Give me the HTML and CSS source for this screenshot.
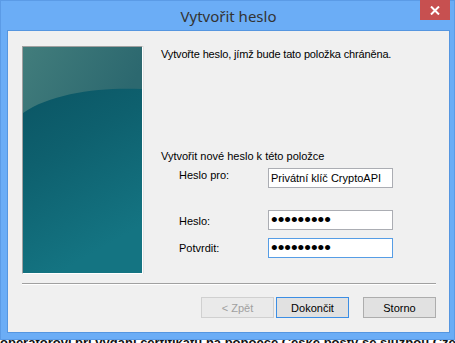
FILE: index.html
```html
<!DOCTYPE html>
<html lang="cs">
<head>
  <meta charset="UTF-8">
  <meta name="viewport" content="width=device-width, initial-scale=1.0">
  <title>Vytvořit heslo</title>
  <link rel="stylesheet" href="styles.css">
</head>
<body>

<div class="window">
  <div class="titlebar">
    <span></span>
    <div class="title">Vytvořit heslo</div>
    <button class="close-btn" title="Zavřít">
      <svg width="10" height="9" viewBox="0 0 10 9">
        <path d="M1 0.5 L9 8.5 M9 0.5 L1 8.5" stroke="#fff" stroke-width="2"/>
      </svg>
    </button>
  </div>

  <div class="client">
    <div class="main">
      <div class="picture">
        <svg width="119" height="226" viewBox="0 0 119 226">
          <defs>
            <linearGradient id="base" x1="0" y1="0" x2="0.3" y2="1">
              <stop offset="0" stop-color="#09505f"/>
              <stop offset="0.5" stop-color="#0e606e"/>
              <stop offset="1" stop-color="#147482"/>
            </linearGradient>
            <linearGradient id="shine" x1="0" y1="0" x2="1" y2="0.3">
              <stop offset="0" stop-color="#427d7c"/>
              <stop offset="1" stop-color="#2c686f"/>
            </linearGradient>
          </defs>
          <rect width="119" height="226" fill="url(#base)"/>
          <path d="M0 0 H119 V42 C78 40 28 46 0 66 Z" fill="url(#shine)"/>
        </svg>
      </div>

      <div class="content">
        <p class="intro">Vytvořte heslo, jímž bude tato položka chráněna.</p>

        <p class="heading">Vytvořit nové heslo k této položce</p>

        <div class="row">
          <label class="label" for="target">Heslo pro:</label>
          <input class="field" type="text" id="target" value="Privátní klíč CryptoAPI" readonly>
        </div>

        <div class="row row-password">
          <label class="label label-low" for="password">Heslo:</label>
          <input class="field secret" type="password" id="password" value="123456789">
        </div>

        <div class="row row-confirm">
          <label class="label label-mid" for="confirm">Potvrdit:</label>
          <input class="field secret focused" type="password" id="confirm" value="123456789">
        </div>
      </div>
    </div>

    <div class="separator"></div>

    <div class="buttons">
      <button class="btn" disabled>&lt; Zpět</button>
      <button class="btn btn-default">Dokončit</button>
      <button class="btn btn-cancel">Storno</button>
    </div>
  </div>
</div>

<div class="page-text">
  <div class="page-line">operatorovi při vydání certifikátu na pobočce České pošty se službou Czech POINT</div>
</div>

</body>
</html>
```

FILE: styles.css
```css
body {
  margin: 0;
  background: #fff;
  font-family: "Liberation Sans", Arial, sans-serif;
  font-size: 11px;
  color: #000;
}
.window {
  width: 455px;
  height: 340px;
  box-sizing: border-box;
  border: 1px solid #5b9be6;
  background: #6badf6;
  padding: 0 4px 6px 6px;
  display: flex;
  flex-direction: column;
}
.titlebar {
  height: 29px;
  display: grid;
  grid-template-columns: 1fr auto 1fr;
  align-items: start;
}
.title {
  font-family: "Noto Sans", "Open Sans", sans-serif;
  font-size: 15px;
  color: #333;
  line-height: 20px;
  padding-top: 5px;
}
.close-btn {
  justify-self: end;
  width: 30px;
  height: 20px;
  margin-top: -1px;
  border: none;
  padding: 0;
  background: #c75050;
  display: flex;
  align-items: center;
  justify-content: center;
  cursor: pointer;
}
.client {
  flex: 1;
  border: 1px solid #5596e0;
  background: #f0f0f0;
  padding: 15px 13px 0 14px;
}
.main {
  display: flex;
}
.picture {
  width: 119px;
  height: 226px;
  border-top: 1px solid #a0a0a0;
  border-left: 1px solid #a0a0a0;
  border-right: 1px solid #fff;
  border-bottom: 1px solid #fff;
  box-shadow: 1px 0 0 #e3e3e3;
}
.picture svg {
  display: block;
}
.content {
  margin-left: 18px;
  line-height: 13px;
}
.intro {
  margin: 2px 0 0;
  letter-spacing: -0.15px;
}
.heading {
  margin: 89px 0 0;
}
.row {
  display: flex;
  align-items: flex-start;
  margin: 5px 0 0 18px;
}
.row-password {
  margin-top: 22px;
}
.row-confirm {
  margin-top: 8px;
}
.label {
  width: 89px;
  padding-top: 1px;
}
.label-low {
  padding-top: 5px;
}
.label-mid {
  padding-top: 4px;
}
.field {
  width: 125px;
  height: 20px;
  box-sizing: border-box;
  margin: 0;
  padding: 0 2px;
  border: 1px solid #abadb3;
  background: #fff;
  font-family: "Liberation Sans", Arial, sans-serif;
  font-size: 11px;
  color: #000;
  outline: none;
}
.secret {
  font-size: 19px;
}
.focused {
  border-color: #569de5;
}
.separator {
  margin-top: 9px;
  border-top: 1px solid #a0a0a0;
  border-bottom: 1px solid #fff;
}
.buttons {
  display: flex;
  justify-content: flex-end;
  margin-top: 12px;
}
.btn {
  width: 73px;
  height: 21px;
  padding: 0;
  border: 1px solid #adadad;
  background: #e1e1e1;
  font-family: "Liberation Sans", Arial, sans-serif;
  font-size: 11px;
  color: #000;
}
.btn:disabled {
  color: #a0a0a0;
  border-color: #d0d0d0;
  background: #eaeaea;
}
.btn-default {
  margin-left: 2px;
  border-color: #3c8ee4;
}
.btn-cancel {
  margin-left: 14px;
}
.page-text {
  height: 3px;
  overflow: hidden;
}
.page-line {
  margin-top: -5px;
  font-size: 13px;
  font-weight: bold;
  white-space: nowrap;
  color: #111;
}
```
